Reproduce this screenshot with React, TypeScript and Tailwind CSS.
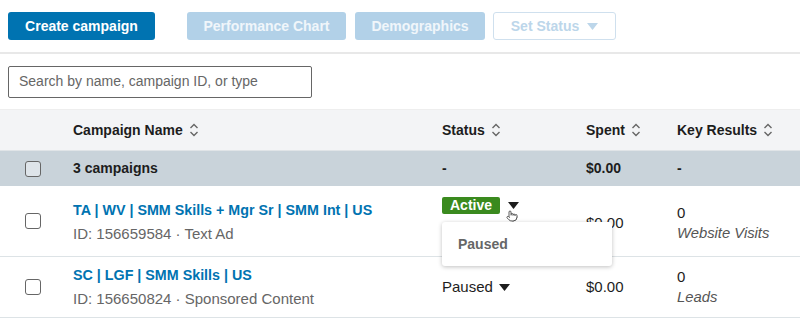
import { Pointer } from "lucide-react";

function SortIcon() {
  return (
    <svg width="10" height="14" viewBox="0 0 10 14" className="ml-1.5 shrink-0" fill="none">
      <path d="M1.5 5 L5 1.5 L8.5 5" stroke="#666" strokeWidth="1.4" />
      <path d="M1.5 9 L5 12.5 L8.5 9" stroke="#666" strokeWidth="1.4" />
    </svg>
  );
}

function Caret({ color = "#1d1d1d" }: { color?: string }) {
  return (
    <svg width="11" height="7" viewBox="0 0 11 7">
      <path d="M0 0 H11 L5.5 7 Z" fill={color} />
    </svg>
  );
}

function Checkbox() {
  return <div className="w-4 h-4 rounded-[3px] border border-[#666] bg-white/40" />;
}

const cols = "grid grid-cols-[73px_369px_144px_91px_1fr]";

export default function App() {
  return (
    <div className="w-[800px] h-[322px] overflow-hidden bg-white text-[#1d1d1d]" style={{ fontFamily: '"Liberation Sans", Arial, sans-serif' }}>
      <div className="h-[54px] flex items-center px-2 gap-2 border-b-2 border-[#e8e8e8]">
        <button className="h-7 w-[147px] rounded-[3px] bg-[#0073b1] text-white text-[14px] font-bold">Create campaign</button>
        <button className="ml-6 h-7 w-[159px] rounded-[3px] bg-[#b2d1e8] text-white/80 text-[14px] font-bold">Performance Chart</button>
        <button className="ml-[1px] h-7 w-[130px] rounded-[3px] bg-[#b2d1e8] text-white/80 text-[14px] font-bold">Demographics</button>
        <button className="h-7 w-[123px] rounded-[3px] border border-[#cfe0ee] text-[#bcd6ea] text-[14px] font-bold flex items-center justify-center gap-2">
          Set Status <Caret color="#bcd6ea" />
        </button>
      </div>

      <div className="h-[56px] flex items-center px-2 border-b border-[#eeeeee]">
        <div className="w-[304px] h-[32px] border border-[#666] rounded-[2px] flex items-center px-2.5 text-[14px] text-[#666]">
          Search by name, campaign ID, or type
        </div>
      </div>

      <div className={`${cols} h-[41px] bg-[#f3f4f6] items-center text-[14px] font-bold border-b border-[#e0e4e7]`}>
        <div />
        <div className="flex items-center">Campaign Name <SortIcon /></div>
        <div className="flex items-center">Status <SortIcon /></div>
        <div className="flex items-center">Spent <SortIcon /></div>
        <div className="flex items-center">Key Results <SortIcon /></div>
      </div>

      <div className={`${cols} h-[35px] bg-[#c9d3da] items-center text-[14px] font-bold`}>
        <div className="pl-[25px]"><Checkbox /></div>
        <div>3 campaigns</div>
        <div>-</div>
        <div>$0.00</div>
        <div>-</div>
      </div>

      <div className={`${cols} h-[71px] items-center text-[15px] border-b border-[#dde3e6]`}>
        <div className="pl-[25px]"><Checkbox /></div>
        <div className="pt-[2px]">
          <div className="text-[#0073b1] font-bold text-[14.3px] leading-5">TA | WV | SMM Skills + Mgr Sr | SMM Int | US</div>
          <div className="text-[#666] leading-5 mt-1">ID: 156659584 · Text Ad</div>
        </div>
        <div className="relative self-start pt-[11px]">
          <div className="flex items-center gap-2">
            <span className="h-[17px] w-[58px] flex items-center justify-center rounded-[2px] bg-[#3a8a1e] text-white font-bold text-[14px]">Active</span>
            <Caret />
          </div>
          <Pointer size={12} className="absolute left-[64px] top-[24px] text-[#333] fill-white" strokeWidth={1.6} />
          <div className="absolute left-0 top-[36px] z-10 w-[170px] h-[44px] bg-white rounded-[3px] shadow-[0_1px_4px_rgba(0,0,0,0.25)] flex items-center pl-4 text-[#666] font-bold text-[14px]">
            Paused
          </div>
        </div>
        <div className="pt-[5px]">$0.00</div>
        <div className="pt-[3px]">
          <div className="leading-5">0</div>
          <div className="italic text-[#555] leading-5 text-[14.8px]">Website Visits</div>
        </div>
      </div>

      <div className={`${cols} h-[61px] items-center text-[15px] border-b border-[#dde3e6]`}>
        <div className="pl-[25px]"><Checkbox /></div>
        <div>
          <div className="text-[#0073b1] font-bold text-[14.3px] leading-5">SC | LGF | SMM Skills | US</div>
          <div className="text-[#666] leading-5 mt-1">ID: 156650824 · Sponsored Content</div>
        </div>
        <div className="flex items-center gap-1.5">Paused <Caret /></div>
        <div>$0.00</div>
        <div>
          <div className="leading-5">0</div>
          <div className="italic text-[#555] leading-5 text-[14.8px]">Leads</div>
        </div>
      </div>
    </div>
  );
}
